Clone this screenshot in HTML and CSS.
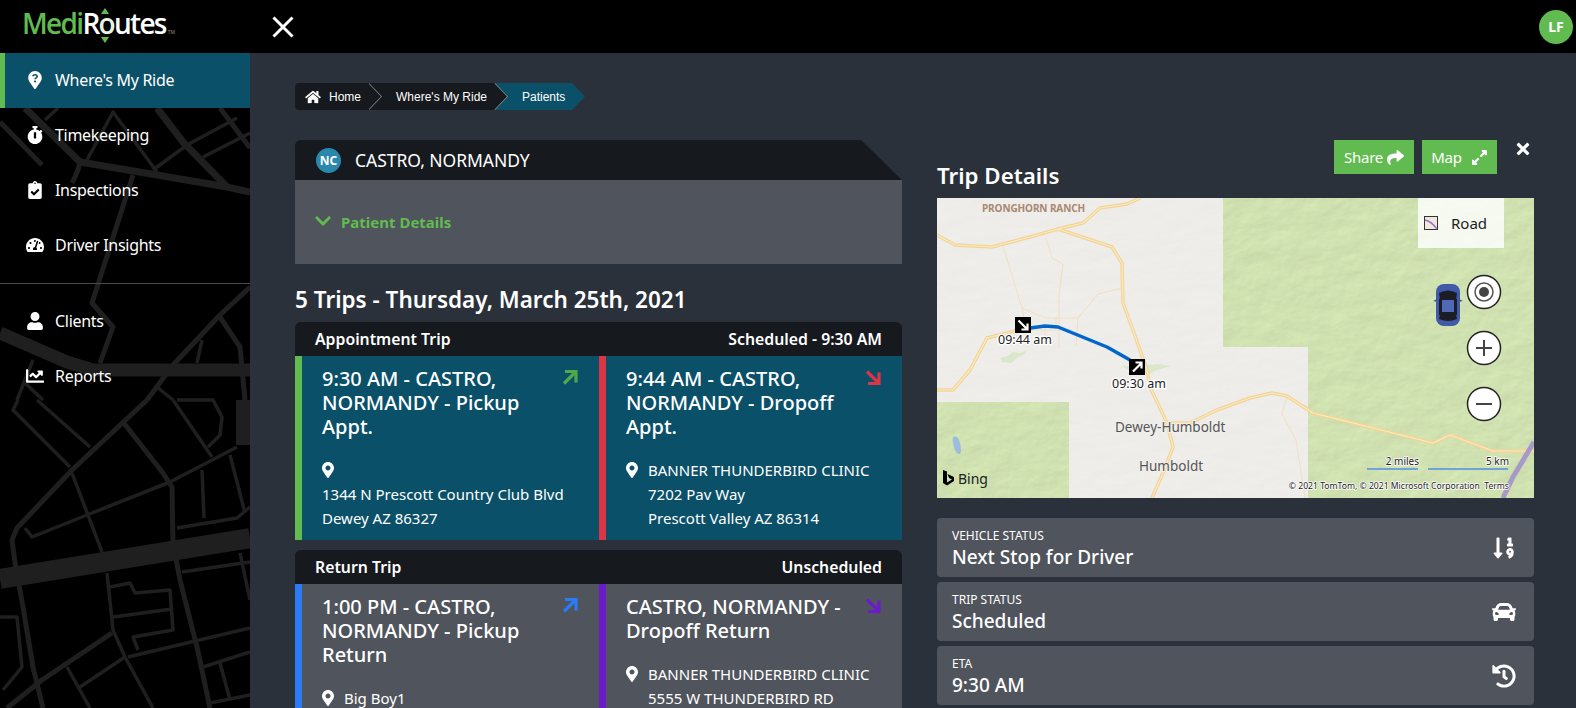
FILE: index.html
```html
<!DOCTYPE html>
<html lang="en">
<head>
<meta charset="utf-8">
<title>MediRoutes - Where's My Ride</title>
<link rel="stylesheet" href="styles.css">
</head>
<body>
<header class="topbar">
  <div class="logo"><span class="logo-green">Medi</span><span class="logo-white">R</span><span class="logo-o">o</span><span class="logo-white">utes</span><span class="logo-tm">TM</span></div>
  <svg class="menu-close" viewBox="0 0 22 22"><path d="M1.5 1.5l19 19M20.5 1.5l-19 19"/></svg>
  <div class="avatar">LF</div>
</header>
<div class="shell">
  <aside class="sidebar">
    <svg class="city" viewBox="0 0 250 655" preserveAspectRatio="none">
      <g transform="translate(0,-53)">
        <g class="r13">
          <path d="M0 333L67 362L93 370H250"/>
        </g>
        <path class="r20" d="M0 579L250 538"/>
        <path class="r14" d="M243 400V445"/>
        <g class="r8">
          <path d="M80 162L157 175L227 187L250 192"/>
          <path d="M25 108L80 162"/>
          <path d="M157 108L183 142L227 187"/>
        </g>
        <g class="r5">
          <path d="M147 400L72 470L17 528L12 540L15 563L23 607L33 667L43 708"/>
          <path d="M123 422L163 473L172 487L173 543L180 580L197 647L210 708"/>
          <path d="M250 287L220 315L173 365L147 400"/>
          <path d="M220 317L240 347L245 400"/>
          <path d="M133 175L92 303L113 327L100 363"/>
          <path d="M112 633L42 680L7 708"/>
          <path d="M0 122L42 165"/>
          <path d="M80 162Q78 172 72 183"/>
          <path d="M220 108L250 148"/>
        </g>
        <g class="r3">
          <path d="M25 528L32 537L87 515L170 482L237 447"/>
          <path d="M72 473L102 552"/>
          <path d="M107 573L113 630L125 657L153 708"/>
          <path d="M125 657L80 687"/>
          <path d="M67 667L90 708"/>
          <path d="M128 657L250 628"/>
          <path d="M203 667L250 652"/>
          <path d="M220 663L230 700"/>
          <path d="M210 703L250 695"/>
          <path d="M110 587L130 583L135 593L170 590L173 630L133 637L138 650"/>
          <path d="M113 617L172 609"/>
          <path d="M182 572L250 562"/>
          <path d="M177 528L237 518L250 507"/>
          <path d="M202 470L204 518"/>
          <path d="M230 455L245 513"/>
          <path d="M173 400L212 457"/>
          <path d="M177 400H213L222 417L220 435L208 447"/>
          <path d="M37 400L90 447"/>
          <path d="M18 400L13 410L70 467"/>
          <path d="M0 617H17L22 667L3 690"/>
          <path d="M240 553L250 600"/>
          <path d="M202 340L197 363"/>
          <path d="M33 360L17 400"/>
          <path d="M25 383L43 400"/>
          <path d="M157 387L173 400"/>
          <path d="M45 120L58 108"/>
          <path d="M87 160L113 112L157 172"/>
          <path d="M153 170L187 145L237 118"/>
          <path d="M203 157L250 133"/>
        </g>
      </g>
    </svg>
    <nav class="nav">
      <a class="nav-item active"><svg class="nav-icon" viewBox="0 0 384 512"><path class="f-white" d="M172.268 501.67C26.97 291.031 0 268.413 0 192 0 85.961 85.961 0 192 0s192 85.961 192 192c0 76.413-26.97 99.031-172.268 309.67-9.535 13.774-29.93 13.773-39.464 0z"/><path class="q-mark" d="M128 150c8-28 34-42 64-42 36 0 62 22 62 50 0 40-62 40-62 80"/><circle class="q-dot" cx="192" cy="300" r="30"/></svg><span>Where's My Ride</span></a>
      <a class="nav-item"><svg class="nav-icon" viewBox="0 0 448 512"><path class="f-white" d="M432 304c0 114.9-93.1 208-208 208S16 418.9 16 304c0-104 76.3-190.2 176-205.5V64h-28c-6.6 0-12-5.4-12-12V12c0-6.6 5.4-12 12-12h120c6.6 0 12 5.4 12 12v40c0 6.6-5.4 12-12 12h-28v34.5c37.5 5.8 71.7 21.6 99.7 44.6l27.5-27.5c4.7-4.7 12.3-4.7 17 0l28.3 28.3c4.7 4.7 4.7 12.3 0 17l-29.4 29.4-.6.6C419.7 223.3 432 262.2 432 304zm-176 36V188.5c0-6.6-5.4-12-12-12h-40c-6.6 0-12 5.4-12 12V340c0 6.6 5.4 12 12 12h40c6.6 0 12-5.4 12-12z"/></svg><span>Timekeeping</span></a>
      <a class="nav-item"><svg class="nav-icon" viewBox="0 0 384 512"><path class="f-white" d="M336 64h-80c0-35.3-28.7-64-64-64s-64 28.7-64 64H48C21.5 64 0 85.5 0 112v352c0 26.5 21.5 48 48 48h288c26.5 0 48-21.5 48-48V112c0-26.5-21.5-48-48-48zM192 40c13.3 0 24 10.7 24 24s-10.7 24-24 24-24-10.7-24-24 10.7-24 24-24zm121.2 231.8l-143 141.8c-4.7 4.7-12.3 4.6-17-.1l-82.6-83.3c-4.7-4.7-4.6-12.3.1-17L99.1 285c4.7-4.7 12.3-4.6 17 .1l46 46.4 106-105.2c4.7-4.7 12.3-4.6 17 .1l28.2 28.4c4.7 4.8 4.6 12.3-.1 17z"/></svg><span>Inspections</span></a>
      <a class="nav-item"><svg class="nav-icon" viewBox="0 0 576 512"><path class="f-white" d="M288 32C128.94 32 0 160.94 0 320c0 52.8 14.25 102.26 39.06 144.8 5.61 9.62 16.3 15.2 27.44 15.2h443c11.14 0 21.83-5.58 27.44-15.2C561.75 422.26 576 372.8 576 320c0-159.06-128.94-288-288-288zm0 64c14.71 0 26.58 10.13 30.32 23.65-1.11 2.26-2.64 4.23-3.45 6.67l-9.22 27.67c-5.13 3.49-10.97 6.01-17.64 6.01-17.67 0-32-14.33-32-32S270.33 96 288 96zM96 384c-17.67 0-32-14.33-32-32s14.33-32 32-32 32 14.33 32 32-14.33 32-32 32zm48-160c-17.67 0-32-14.33-32-32s14.33-32 32-32 32 14.33 32 32-14.33 32-32 32zm246.77-72.41l-61.33 184C343.13 347.33 352 364.54 352 384c0 11.72-3.38 22.55-8.88 32H232.88c-5.5-9.45-8.88-20.28-8.88-32 0-33.94 26.5-61.43 59.9-63.59l61.34-184.01c4.17-12.56 17.73-19.45 30.36-15.17 12.57 4.19 19.35 17.79 15.17 30.36zm14.66 57.2l15.52-46.55c3.47-1.29 7.13-2.23 11.05-2.23 17.67 0 32 14.33 32 32s-14.33 32-32 32c-11.38-.01-20.89-6.27-26.57-15.22zM480 384c-17.67 0-32-14.33-32-32s14.33-32 32-32 32 14.33 32 32-14.33 32-32 32z"/></svg><span>Driver Insights</span></a>
    </nav>
    <nav class="nav nav-second">
      <a class="nav-item"><svg class="nav-icon" viewBox="0 0 448 512"><path class="f-white" d="M224 256c70.7 0 128-57.3 128-128S294.7 0 224 0 96 57.3 96 128s57.3 128 128 128zm89.6 32h-16.7c-22.2 10.2-46.9 16-72.9 16s-50.6-5.8-72.9-16h-16.7C60.2 288 0 348.2 0 422.4V464c0 26.5 21.5 48 48 48h352c26.5 0 48-21.5 48-48v-41.6c0-74.2-60.2-134.4-134.4-134.4z"/></svg><span>Clients</span></a>
      <a class="nav-item"><svg class="nav-icon" viewBox="0 0 512 512"><path class="f-white" d="M496 384H64V80c0-8.84-7.16-16-16-16H16C7.16 64 0 71.16 0 80v336c0 17.67 14.33 32 32 32h464c8.84 0 16-7.16 16-16v-32c0-8.84-7.16-16-16-16zM464 96H345.94c-21.38 0-32.09 25.85-16.97 40.97l32.4 32.4L288 242.75l-73.37-73.37c-12.5-12.5-32.76-12.5-45.25 0l-68.69 68.69c-6.25 6.25-6.25 16.38 0 22.63l22.62 22.62c6.25 6.25 16.38 6.25 22.63 0L192 237.25l73.37 73.37c12.5 12.5 32.76 12.5 45.25 0l96-96 32.4 32.4c15.12 15.12 40.97 4.41 40.97-16.97V112c.01-8.84-7.15-16-15.99-16z"/></svg><span>Reports</span></a>
    </nav>
  </aside>
  <main class="main">
    <ol class="crumbs">
      <li class="crumb crumb-home"><svg class="crumb-icon" viewBox="0 0 576 512"><path class="f-white" d="M280.37 148.26L96 300.11V464a16 16 0 0 0 16 16l112.06-.29a16 16 0 0 0 15.92-16V368a16 16 0 0 1 16-16h64a16 16 0 0 1 16 16v95.64a16 16 0 0 0 16 16.05L464 480a16 16 0 0 0 16-16V300L295.67 148.26a12.19 12.19 0 0 0-15.3 0zM571.6 251.47L488 182.56V44.05a12 12 0 0 0-12-12h-56a12 12 0 0 0-12 12v72.61L318.47 43a48 48 0 0 0-61 0L4.34 251.47a12 12 0 0 0-1.6 16.9l25.5 31A12 12 0 0 0 45.15 301l235.22-193.74a12.19 12.19 0 0 1 15.3 0L530.9 301a12 12 0 0 0 16.9-1.6l25.5-31a12 12 0 0 0-1.7-16.93z"/></svg>Home</li>
      <li class="crumb crumb-ride">Where's My Ride</li>
      <li class="crumb crumb-current">Patients</li>
    </ol>
    <div class="columns">
      <section class="left">
        <div class="patient-head"><span class="badge">NC</span><span class="patient-name">CASTRO, NORMANDY</span></div>
        <div class="patient-body"><svg class="chev" viewBox="0 0 448 512"><path d="M207.029 381.476L12.686 187.132c-9.373-9.373-9.373-24.569 0-33.941l22.667-22.667c9.357-9.357 24.522-9.375 33.901-.04L224 284.505l154.745-154.021c9.379-9.335 24.544-9.317 33.901.04l22.667 22.667c9.373 9.373 9.373 24.569 0 33.941L240.971 381.476c-9.373 9.372-24.569 9.372-33.942 0z"/></svg><span>Patient Details</span></div>
        <h2 class="trips-title">5 Trips - Thursday, March 25th, 2021</h2>

        <article class="trip">
          <header class="trip-head"><span>Appointment Trip</span><span>Scheduled - 9:30 AM</span></header>
          <div class="trip-legs teal">
            <div class="leg b-green">
              <svg class="leg-arrow a-green" viewBox="0 0 16 16"><path d="M3 2.5h11v11M14 2.5L2 14.5"/></svg>
              <h3>9:30 AM - CASTRO, NORMANDY - Pickup Appt.</h3>
              <div class="addr stacked">
                <svg class="pin" viewBox="0 0 384 512"><path d="M172.268 501.67C26.97 291.031 0 268.413 0 192 0 85.961 85.961 0 192 0s192 85.961 192 192c0 76.413-26.97 99.031-172.268 309.67-9.535 13.774-29.93 13.773-39.464 0zM192 272c44.183 0 80-35.817 80-80s-35.817-80-80-80-80 35.817-80 80 35.817 80 80 80z"/></svg>
                <p>1344 N Prescott Country Club Blvd<br>Dewey AZ 86327</p>
              </div>
            </div>
            <div class="leg b-red">
              <svg class="leg-arrow a-red" viewBox="0 0 16 16"><path d="M2 2.5l12 12M14 3.5v11H3"/></svg>
              <h3>9:44 AM - CASTRO, NORMANDY - Dropoff Appt.</h3>
              <div class="addr">
                <svg class="pin" viewBox="0 0 384 512"><path d="M172.268 501.67C26.97 291.031 0 268.413 0 192 0 85.961 85.961 0 192 0s192 85.961 192 192c0 76.413-26.97 99.031-172.268 309.67-9.535 13.774-29.93 13.773-39.464 0zM192 272c44.183 0 80-35.817 80-80s-35.817-80-80-80-80 35.817-80 80 35.817 80 80 80z"/></svg>
                <p>BANNER THUNDERBIRD CLINIC<br>7202 Pav Way<br>Prescott Valley AZ 86314</p>
              </div>
            </div>
          </div>
        </article>

        <article class="trip">
          <header class="trip-head"><span>Return Trip</span><span>Unscheduled</span></header>
          <div class="trip-legs gray">
            <div class="leg b-blue">
              <svg class="leg-arrow a-blue" viewBox="0 0 16 16"><path d="M3 2.5h11v11M14 2.5L2 14.5"/></svg>
              <h3>1:00 PM - CASTRO, NORMANDY - Pickup Return</h3>
              <div class="addr">
                <svg class="pin" viewBox="0 0 384 512"><path d="M172.268 501.67C26.97 291.031 0 268.413 0 192 0 85.961 85.961 0 192 0s192 85.961 192 192c0 76.413-26.97 99.031-172.268 309.67-9.535 13.774-29.93 13.773-39.464 0zM192 272c44.183 0 80-35.817 80-80s-35.817-80-80-80-80 35.817-80 80 35.817 80 80 80z"/></svg>
                <p>Big Boy1</p>
              </div>
            </div>
            <div class="leg b-purple">
              <svg class="leg-arrow a-purple" viewBox="0 0 16 16"><path d="M2 2.5l12 12M14 3.5v11H3"/></svg>
              <h3>CASTRO, NORMANDY - Dropoff Return</h3>
              <div class="addr">
                <svg class="pin" viewBox="0 0 384 512"><path d="M172.268 501.67C26.97 291.031 0 268.413 0 192 0 85.961 85.961 0 192 0s192 85.961 192 192c0 76.413-26.97 99.031-172.268 309.67-9.535 13.774-29.93 13.773-39.464 0zM192 272c44.183 0 80-35.817 80-80s-35.817-80-80-80-80 35.817-80 80 35.817 80 80 80z"/></svg>
                <p>BANNER THUNDERBIRD CLINIC<br>5555 W THUNDERBIRD RD</p>
              </div>
            </div>
          </div>
        </article>
      </section>

      <section class="right">
        <div class="right-head">
          <h2 class="details-title">Trip Details</h2>
          <div class="actions">
            <button class="btn">Share<svg class="btn-icon" viewBox="0 0 512 512"><path d="M503.691 189.836L327.687 37.851C312.281 24.546 288 35.347 288 56.015v80.053C127.371 137.907 0 170.1 0 322.326c0 61.441 39.581 122.309 83.333 154.132 13.653 9.931 33.111-2.533 28.077-18.631C66.066 312.814 132.917 274.316 288 272.085V360c0 20.7 24.3 31.453 39.687 18.164l176.004-152c11.071-9.562 11.086-26.753 0-36.328z"/></svg></button>
            <button class="btn btn-map">Map<svg class="btn-icon" viewBox="0 0 448 512"><path d="M212.686 315.314L120 408l32.922 31.029c15.12 15.12 4.412 40.971-16.97 40.971h-112C10.697 480 0 469.255 0 456V344c0-21.382 25.803-32.09 40.922-16.971L72 360l92.686-92.686c6.248-6.248 16.379-6.248 22.627 0l25.373 25.373c6.249 6.248 6.249 16.378 0 22.627zm22.628-118.628L328 104l-32.922-31.029C279.958 57.851 290.666 32 312.048 32h112C437.303 32 448 42.745 448 56v112c0 21.382-25.803 32.09-40.922 16.971L376 152l-92.686 92.686c-6.248 6.248-16.379 6.248-22.627 0l-25.373-25.373c-6.249-6.248-6.249-16.378 0-22.627z"/></svg></button>
            <svg class="panel-close" viewBox="0 0 352 512"><path d="M242.72 256l100.07-100.07c12.28-12.28 12.28-32.19 0-44.48l-22.24-22.24c-12.28-12.28-32.19-12.28-44.48 0L176 189.28 75.93 89.21c-12.28-12.28-32.19-12.28-44.48 0L9.21 111.45c-12.28 12.28-12.28 32.19 0 44.48L109.28 256 9.21 356.07c-12.28 12.28-12.28 32.19 0 44.48l22.24 22.24c12.28 12.28 32.2 12.28 44.48 0L176 322.72l100.07 100.07c12.28 12.28 32.2 12.28 44.48 0l22.24-22.24c12.28-12.28 12.28-32.19 0-44.48L242.72 256z"/></svg>
          </div>
        </div>

        <svg class="map" viewBox="0 0 597 300">
          <defs>
            <filter id="terrain" x="0" y="0" width="100%" height="100%" color-interpolation-filters="sRGB">
              <feTurbulence type="fractalNoise" baseFrequency="0.035 0.05" numOctaves="4" seed="7" result="n"/>
              <feDiffuseLighting in="n" surfaceScale="0.45" lighting-color="#ecffc8" result="l"><feDistantLight azimuth="235" elevation="62"/></feDiffuseLighting>
              <feComposite in="l" in2="SourceGraphic" operator="in"/>
            </filter>
            <filter id="land" x="0" y="0" width="100%" height="100%" color-interpolation-filters="sRGB">
              <feTurbulence type="fractalNoise" baseFrequency="0.03 0.06" numOctaves="4" seed="3" result="n"/>
              <feDiffuseLighting in="n" surfaceScale="0.18" lighting-color="#f7f5f2" result="l"><feDistantLight azimuth="235" elevation="75"/></feDiffuseLighting>
              <feComposite in="l" in2="SourceGraphic" operator="in"/>
            </filter>
          </defs>
          <rect class="m-land" width="597" height="300"/>
          <path class="m-green" d="M286 0H597V300H371V149H286Z"/>
          <rect class="m-green" x="0" y="204" width="132" height="96"/>
          <path class="m-lake" d="M16 239q5 -2 7 6t0 11q-4 1 -6 -7t-1 -10z"/>
          <path class="m-park" d="M63 160l8 -2l5 -4l6 1l8 -3l-2 4l-8 4l-6 5l-9 -1z"/>
          <path class="m-park" d="M184 168h18l18 -2l14 2l-14 4l-8 4l-16 -2z"/>
          <g class="m-minor">
            <path d="M66 48l19 62l4 20"/>
            <path d="M85 110l24 10h32l-2 28M119 120v10"/>
            <path d="M109 40l6 20l11 6l-4 30v54"/>
            <path d="M141 120l20 -24l24 -6"/>
            <path d="M90 132h44M108 130v14"/>
            <path d="M350 198l-5 18l14 26l9 58"/>
          </g>
          <g class="m-road-out">
            <path d="M0 37L18 47L55 49L93 39L121 31L146 25L163 10L190 6L203 0"/>
            <path d="M121 31L175 49L185 65L186 105L196 132L210 172L213 189L230 225L236 249L226 275L215 300"/>
            <path d="M0 192H16L33 172L50 140L90 130"/>
            <path d="M230 225H253L280 212L313 200L335 195L350 198L376 215L496 245L513 237L556 253H597"/>
          </g>
          <g class="m-road-in">
            <path d="M0 37L18 47L55 49L93 39L121 31L146 25L163 10L190 6L203 0"/>
            <path d="M121 31L175 49L185 65L186 105L196 132L210 172L213 189L230 225L236 249L226 275L215 300"/>
            <path d="M0 192H16L33 172L50 140L90 130"/>
            <path d="M230 225H253L280 212L313 200L335 195L350 198L376 215L496 245L513 237L556 253H597"/>
          </g>
          <path class="m-high" d="M597 244L576 279L566 300"/>
          <path class="m-route" d="M93 130L108 128L121 129L170 149L193 162"/>
          <rect class="m-marker" x="78" y="119" width="16" height="16"/>
          <path class="m-marker-arrow" d="M81.5 122.5L90 131M90.5 125.5V131.5H84.5"/>
          <rect class="m-marker" x="192" y="161" width="16" height="16"/>
          <path class="m-marker-arrow" d="M204.5 165L196 173.5M198.5 164.5H204.5V170.5"/>
          <text class="m-time" x="88" y="146">09:44 am</text>
          <text class="m-time" x="202" y="190">09:30 am</text>
          <text class="m-area" x="45" y="14">PRONGHORN RANCH</text>
          <text class="m-city" x="178" y="234">Dewey-Humboldt</text>
          <text class="m-city" x="202" y="273">Humboldt</text>

          <rect class="m-panel" x="481" y="0" width="86" height="50"/>
          <rect class="m-thumb" x="487.5" y="18.5" width="13" height="13"/>
          <path class="m-thumb-road" d="M488 22q6 1 12 9"/>
          <text class="m-road-label" x="514" y="30.500">Road</text>

          <g class="m-car">
            <rect class="c-body" x="499" y="86" width="24" height="42" rx="8"/>
            <path class="c-body" d="M496 103l4 -2v3zM526 103l-4 -2v3z"/>
            <path class="c-dark" d="M502 95q9 -5 18 0l-1 7h-16z"/>
            <path class="c-dark" d="M502 121q9 4 18 0l-1 -5h-16z"/>
            <rect class="c-dark" x="502" y="101" width="18" height="16"/>
            <rect class="c-roof" x="505" y="102" width="12" height="12"/>
          </g>
          <g class="m-ctrl">
            <circle cx="547" cy="94" r="16.5"/>
            <circle cx="547" cy="150" r="16.5"/>
            <circle cx="547" cy="206" r="16.5"/>
          </g>
          <circle class="m-ring" cx="547" cy="94" r="9"/>
          <circle class="m-dot" cx="547" cy="94" r="5"/>
          <path class="m-sign" d="M539 150H555M547 142V158M539 206H555"/>

          <path class="m-bing" d="M6 272l4 1.5v11l5 -3l-3 -1.5l-1.5 -4l6.5 3v4l-7 4.5l-4 -2.5z"/>
          <text class="m-bing-text" x="21" y="286">Bing</text>
          <text class="m-small end" x="482" y="267">2 miles</text>
          <text class="m-small end" x="572" y="267">5 km</text>
          <path class="m-scale" d="M430 271H481M491 271H571"/>
          <text class="m-copy end" x="572" y="291">© 2021 TomTom, © 2021 Microsoft Corporation  Terms</text>
        </svg>

        <div class="statuses">
          <div class="status">
            <div><div class="s-label">VEHICLE STATUS</div><div class="s-value">Next Stop for Driver</div></div>
            <svg class="s-icon" viewBox="0 0 448 512"><path d="M304 96h16v64h-16a16 16 0 0 0-16 16v32a16 16 0 0 0 16 16h96a16 16 0 0 0 16-16v-32a16 16 0 0 0-16-16h-16V48a16 16 0 0 0-16-16h-48a16 16 0 0 0-14.29 8.83l-16 32A16 16 0 0 0 304 96zm26.15 162.91a79 79 0 0 0-55 54.17c-14.25 51.05 21.21 97.77 68.85 102.53a84.07 84.07 0 0 1-20.85 12.91c-7.57 3.4-10.8 12.47-8.18 20.34l9.9 20c2.87 8.63 12.53 13.49 20.9 9.91 58-24.76 86.25-61.61 86.25-132V336c-.02-51.21-48.4-91.34-101.85-77.09zM352 356a20 20 0 1 1 20-20 20 20 0 0 1-20 20zm-176-4h-48V48a16 16 0 0 0-16-16H80a16 16 0 0 0-16 16v304H16c-14.19 0-21.36 17.24-11.29 27.31l80 96a16 16 0 0 0 22.62 0l80-96C197.35 369.26 190.22 352 176 352z"/></svg>
          </div>
          <div class="status">
            <div><div class="s-label">TRIP STATUS</div><div class="s-value">Scheduled</div></div>
            <svg class="s-icon" viewBox="0 0 512 512"><path d="M499.99 176h-59.87l-16.64-41.6C406.38 91.63 365.57 64 319.5 64h-127c-46.06 0-86.88 27.63-103.99 70.4L71.87 176H12.01C4.2 176-1.53 183.34.37 190.91l6 24C7.7 220.25 12.5 224 18.01 224h20.07C24.65 235.73 16 252.78 16 272v48c0 16.12 6.16 30.67 16 41.93V416c0 17.67 14.33 32 32 32h32c17.67 0 32-14.33 32-32v-32h256v32c0 17.67 14.33 32 32 32h32c17.67 0 32-14.33 32-32v-54.07c9.84-11.25 16-25.8 16-41.93v-48c0-19.22-8.65-36.27-22.07-48H494c5.51 0 10.31-3.75 11.64-9.09l6-24c1.89-7.57-3.84-14.91-11.65-14.91zm-352.06-17.83c7.29-18.22 24.94-30.17 44.57-30.17h127c19.63 0 37.28 11.95 44.57 30.17L384 208H128l19.93-49.83zM96 319.8c-19.2 0-32-12.76-32-31.9S76.8 256 96 256s48 28.71 48 47.85-28.8 15.95-48 15.95zm320 0c-19.2 0-48 3.19-48-15.95S396.8 256 416 256s32 12.76 32 31.9-12.8 31.9-32 31.9z"/></svg>
          </div>
          <div class="status">
            <div><div class="s-label">ETA</div><div class="s-value">9:30 AM</div></div>
            <svg class="s-icon" viewBox="0 0 512 512"><path d="M504 255.531c.253 136.64-111.18 248.372-247.82 248.468-59.015.042-113.223-20.53-155.822-54.911-11.077-8.94-11.905-25.541-1.839-35.607l11.267-11.267c8.609-8.609 22.353-9.551 31.891-1.984C173.062 425.135 212.781 440 256 440c101.705 0 184-82.311 184-184 0-101.705-82.311-184-184-184-48.814 0-93.149 18.969-126.068 49.932l50.754 50.754c10.08 10.08 2.941 27.314-11.313 27.314H24c-8.837 0-16-7.163-16-16V38.627c0-14.254 17.234-21.393 27.314-11.314l49.372 49.372C129.209 34.136 189.552 8 256 8c136.81 0 247.747 110.78 248 247.531zm-180.912 78.784l9.823-12.63c8.138-10.463 6.253-25.542-4.21-33.679L288 256.349V152c0-13.255-10.745-24-24-24h-16c-13.255 0-24 10.745-24 24v135.651l65.409 50.874c10.463 8.137 25.541 6.253 33.679-4.21z"/></svg>
          </div>
        </div>
      </section>
    </div>
  </main>
</div>
</body>
</html>
```

FILE: styles.css
```css
* { box-sizing: border-box; }
html, body { margin: 0; height: 100%; overflow: hidden; }
body {
  font-family: "Noto Sans", "Open Sans", sans-serif;
  color: #fff;
  background: #2b313a;
  display: flex;
  flex-direction: column;
}
svg { display: block; flex: none; }

/* top bar */
.topbar {
  height: 53px;
  flex: none;
  background: #000;
  display: flex;
  align-items: center;
  padding: 0 3px 0 22px;
}
.logo {
  width: 250px;
  font-family: "Open Sans", sans-serif;
  font-size: 28px;
  font-weight: 600;
  letter-spacing: -1.7px;
  display: flex;
  align-items: baseline;
  line-height: 53px;
  position: relative;
  top: 1px;
}
.logo-green { color: #62bb50; }
.logo-white { color: #fff; }
.logo-o { color: #e8f3e2; position: relative; }
.logo-o::before, .logo-o::after {
  content: "";
  position: absolute;
  left: 50%;
  margin-left: -5px;
  border-left: 4px solid transparent;
  border-right: 4px solid transparent;
}
.logo-o::before { top: 11px; border-bottom: 6px solid #62bb50; }
.logo-o::after { bottom: 7px; border-top: 6px solid #62bb50; }
.logo-tm { font-size: 5px; color: #999; font-weight: 400; letter-spacing: 0; margin-left: 2px; }
.menu-close { width: 22px; height: 22px; }
.menu-close path { stroke: #fff; stroke-width: 3; fill: none; }
.avatar {
  margin-left: auto;
  width: 34px;
  height: 34px;
  border-radius: 50%;
  background: #62bb50;
  display: flex;
  align-items: center;
  justify-content: center;
  font-size: 14px;
  font-weight: 700;
}

.shell { flex: 1; display: flex; min-height: 0; }

/* sidebar */
.sidebar {
  width: 250px;
  flex: none;
  background: #000;
  position: relative;
  overflow: hidden;
}
.city { position: absolute; left: 0; top: 0; width: 250px; height: 655px; }
.city path { fill: none; stroke: #1f1f1f; stroke-linejoin: round; }
path.r20 { stroke-width: 20; }
path.r14 { stroke-width: 14; }
.r13 path { stroke-width: 13; }
.r8 path { stroke-width: 7; }
.r5 path { stroke-width: 5; }
.r3 path { stroke-width: 3.5; }
.nav { position: relative; display: flex; flex-direction: column; }
.nav:first-of-type { padding-bottom: 10px; border-bottom: 1px solid #4a4a4a; }
.nav-second { padding-top: 10px; }
.nav-item {
  height: 55px;
  display: flex;
  align-items: center;
  padding-left: 26px;
  padding-bottom: 1px;
  font-size: 16px;
  letter-spacing: -0.3px;
  color: #fff;
}
.nav-item span { margin-left: auto; width: 195px; }
.nav-item.active { background: #0a5068; border-left: 5px solid #62bb50; padding-left: 21px; }
.nav-icon { width: 18px; height: 18px; }
.f-white { fill: #fff; }
.q-mark { fill: none; stroke: #0a5068; stroke-width: 44; }
.q-dot { fill: #0a5068; }

/* main */
.main {
  flex: 1;
  min-width: 0;
  padding: 30px 42px 0 45px;
  overflow: hidden;
}
.crumbs {
  list-style: none;
  margin: 0 0 30px;
  padding: 0;
  display: flex;
  height: 27px;
  font-family: "Liberation Sans", Arial, sans-serif;
  font-size: 12px;
}
.crumb {
  position: relative;
  display: flex;
  align-items: center;
  background: #16191d;
  height: 27px;
}
.crumb-home { width: 73px; padding-left: 10px; border-radius: 4px 0 0 4px; z-index: 2; }
.crumb-icon { width: 16px; height: 14px; margin-right: 8px; }
.crumb-ride { width: 126px; padding-left: 28px; z-index: 1; }
.crumb-current { width: 78px; padding-left: 28px; background: #0a5068; }
.crumb::after, .crumb::before {
  content: "";
  position: absolute;
  top: 0;
  height: 27px;
  width: 13px;
  clip-path: polygon(0 0, 100% 50%, 0 100%);
}
.crumb::before { left: 100%; margin-left: 1px; background: #8a8d91; }
.crumb::after { left: 100%; background: #16191d; }
.crumb-current::before { display: none; }
.crumb-current::after { background: #0a5068; }

.columns { display: grid; grid-template-columns: 607px 597px; column-gap: 35px; align-items: start; }

/* left column */
.patient-head {
  height: 40px;
  background: #16191d;
  border-radius: 6px 0 0 0;
  clip-path: polygon(0 0, 566px 0, 100% 100%, 0 100%);
  display: flex;
  align-items: center;
  padding-left: 20px;
}
.badge {
  width: 25px;
  height: 25px;
  border-radius: 50%;
  background: #2a88ad;
  font-size: 12px;
  font-weight: 700;
  display: flex;
  align-items: center;
  justify-content: center;
  margin-left: 1px;
  margin-right: 14px;
}
.patient-name { font-size: 17.5px; letter-spacing: -0.05px; }
.patient-body {
  height: 84px;
  background: #50545c;
  display: flex;
  align-items: center;
  padding-left: 20px;
  color: #62bb50;
  font-size: 15px;
  font-weight: 700;
}
.chev { width: 16px; height: 18px; margin-right: 10px; fill: #62bb50; position: relative; top: -1px; }
.trips-title {
  margin: 0;
  padding-top: 14px;
  height: 58px;
  line-height: 44px;
  font-size: 22.5px;
  font-weight: 600;
}
.trip { margin-bottom: 10px; border-radius: 6px 6px 0 0; overflow: hidden; }
.trip-head {
  height: 34px;
  background: #16191d;
  display: flex;
  align-items: center;
  justify-content: space-between;
  padding: 0 20px;
  font-size: 15.8px;
  font-weight: 600;
}
.trip-legs { display: grid; grid-template-columns: 304px 303px; }
.teal { background: #0a5068; }
.gray { background: #50545c; }
.leg { position: relative; padding: 11px 20px 10px; border-left: 7px solid; }
.b-green { border-color: #62bb50; }
.b-red { border-color: #dc3545; }
.b-blue { border-color: #2a7bf5; }
.b-purple { border-color: #6a1ccb; }
.leg h3 { margin: 0 20px 19px 0; font-size: 20px; line-height: 24px; font-weight: 500; }
.leg-arrow { position: absolute; top: 13px; right: 21px; width: 16px; height: 16px; fill: none; stroke-width: 3.2; }
.a-green { stroke: #4fa94a; }
.a-red { stroke: #dc3545; }
.a-blue { stroke: #2a7bf5; }
.a-purple { stroke: #6a1ccb; }
.addr { display: flex; font-size: 15px; line-height: 24px; }
.addr.stacked { flex-direction: column; }
.addr.stacked .pin { margin-bottom: 4px; }
.addr p { margin: 0; }
.pin { width: 12px; height: 16px; fill: #fff; margin: 4px 10px 0 0; }

/* right column */
.right-head { height: 58px; display: flex; justify-content: space-between; }
.details-title { margin: 23px 0 0; font-size: 22.3px; line-height: 26px; font-weight: 600; }
.actions { display: flex; align-items: flex-start; }
.btn {
  height: 34px;
  width: 80px;
  border: 0;
  background: #62bb50;
  color: #fff;
  font: inherit;
  font-size: 15px;
  letter-spacing: -0.3px;
  display: flex;
  align-items: center;
  justify-content: center;
  gap: 4px;
  padding: 0;
}
.btn-map { width: 75px; margin-left: 8px; gap: 9px; }
.btn-icon { width: 17px; height: 17px; fill: #fff; }
.panel-close { width: 14px; height: 18px; fill: #fff; margin: 0 4px 0 19px; }
.map { width: 597px; height: 300px; background: #efedea; }
.m-land { fill: #f0eeeb; filter: url(#land); }
.m-green { fill: #cfe0ad; filter: url(#terrain); }
.m-lake { fill: #9bbcdc; }
.m-park { fill: #dbe6cb; }
.m-minor path { fill: none; stroke: #f0dfc0; stroke-width: 1; }
.m-road-out path { fill: none; stroke: #f1d596; stroke-width: 3.5; stroke-linejoin: round; }
.m-road-in path { fill: none; stroke: #fbe9c2; stroke-width: 1.2; stroke-linejoin: round; }
.m-high { fill: none; stroke: #a79ac8; stroke-width: 5; }
.m-route { fill: none; stroke: #0066cc; stroke-width: 3.5; stroke-linejoin: round; }
.m-marker { fill: #000; }
.m-marker-arrow { fill: none; stroke: #fff; stroke-width: 2.2; }
.map text { font-family: "Noto Sans", sans-serif; }
.m-time { font-size: 12.5px; fill: #222; text-anchor: middle; paint-order: stroke; stroke: #fff; stroke-width: 2.5px; }
.m-area { font-size: 10px; font-weight: 700; fill: #a88870; letter-spacing: -0.1px; }
.m-city { font-size: 13.5px; fill: #555; paint-order: stroke; stroke: #f0eeeb; stroke-width: 2px; }
.m-panel { fill: #fff; fill-opacity: 0.8; }
.m-thumb { fill: #eee9df; stroke: #333; stroke-width: 1; }
.m-thumb-road { fill: none; stroke: #a06fc0; stroke-width: 1.5; }
.m-road-label { font-size: 15px; fill: #222; }
.c-body { fill: #3f5aa8; }
.c-dark { fill: #1c1d24; }
.c-roof { fill: #4f69b8; }
.m-ctrl circle { fill: #fff; stroke: #222; stroke-width: 1.5; }
.m-ring { fill: none; stroke: #555; stroke-width: 1.5; }
.m-dot { fill: #444; }
.m-sign { fill: none; stroke: #444; stroke-width: 2; }
.m-bing { fill: #000; }
.m-bing-text { font-size: 14px; fill: #222; }
.m-small { font-size: 10px; fill: #222; paint-order: stroke; stroke: #fff; stroke-width: 1.5px; }
.m-copy { font-size: 8.6px; fill: #222; paint-order: stroke; stroke: #fff; stroke-width: 1.5px; white-space: pre; }
.end { text-anchor: end; }
.m-scale { fill: none; stroke: #4f8fe8; stroke-width: 1.5; }
.statuses { display: flex; flex-direction: column; gap: 5px; margin-top: 20px; }
.status {
  height: 59px;
  background: #50545c;
  border-radius: 4px;
  display: flex;
  align-items: center;
  justify-content: space-between;
  padding: 0 18px 0 15px;
}
.s-label { font-size: 12px; line-height: 17px; margin-top: 2px; }
.s-value { font-size: 19px; line-height: 25px; font-weight: 500; margin-top: 1px; }
.s-icon { width: 24px; height: 24px; fill: #fff; }
```
